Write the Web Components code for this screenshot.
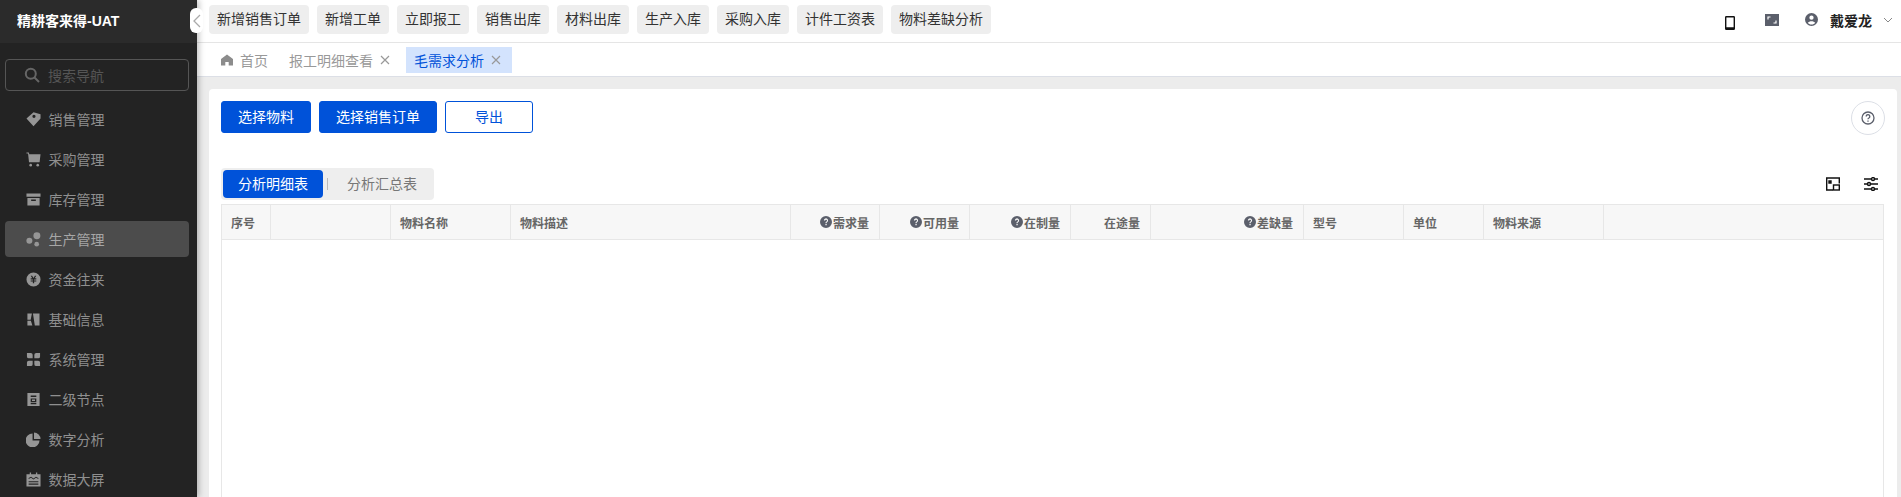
<!DOCTYPE html>
<html lang="zh">
<head>
<meta charset="utf-8">
<title>毛需求分析</title>
<style>
  html, body { margin: 0; height: 100%; overflow: hidden; }
  body { font-family: "Liberation Sans", "Noto Sans CJK SC", sans-serif; font-size: 14px; }
</style>
</head>
<body>
<app-shell>
  <side-bar slot="side" title-text="精耕客来得-UAT">
    <nav-item icon="tag">销售管理</nav-item>
    <nav-item icon="cart">采购管理</nav-item>
    <nav-item icon="box">库存管理</nav-item>
    <nav-item icon="dots" active>生产管理</nav-item>
    <nav-item icon="coin">资金往来</nav-item>
    <nav-item icon="layout">基础信息</nav-item>
    <nav-item icon="apps">系统管理</nav-item>
    <nav-item icon="doc">二级节点</nav-item>
    <nav-item icon="pie">数字分析</nav-item>
    <nav-item icon="board">数据大屏</nav-item>
  </side-bar>

  <top-bar slot="top" user="戴爱龙">
    <quick-link>新增销售订单</quick-link>
    <quick-link>新增工单</quick-link>
    <quick-link>立即报工</quick-link>
    <quick-link>销售出库</quick-link>
    <quick-link>材料出库</quick-link>
    <quick-link>生产入库</quick-link>
    <quick-link>采购入库</quick-link>
    <quick-link>计件工资表</quick-link>
    <quick-link>物料差缺分析</quick-link>
  </top-bar>

  <tab-strip slot="top">
    <page-tab home>首页</page-tab>
    <page-tab closable>报工明细查看</page-tab>
    <page-tab closable active>毛需求分析</page-tab>
  </tab-strip>

  <analysis-card>
    <action-button slot="actions" primary>选择物料</action-button>
    <action-button slot="actions" primary>选择销售订单</action-button>
    <action-button slot="actions" wide>导出</action-button>

    <seg-item slot="segments" active>分析明细表</seg-item>
    <seg-item slot="segments">分析汇总表</seg-item>

    <data-table slot="table">
      <head-cell>序号</head-cell>
      <head-cell></head-cell>
      <head-cell>物料名称</head-cell>
      <head-cell>物料描述</head-cell>
      <head-cell end hint>需求量</head-cell>
      <head-cell end hint>可用量</head-cell>
      <head-cell end hint>在制量</head-cell>
      <head-cell end>在途量</head-cell>
      <head-cell end hint>差缺量</head-cell>
      <head-cell>型号</head-cell>
      <head-cell>单位</head-cell>
      <head-cell>物料来源</head-cell>
      <head-cell></head-cell>
    </data-table>
  </analysis-card>
</app-shell>

<script>
const ICONS = {
  tag: '<path fill-rule="evenodd" d="M8 .3 15.500 2.500V7L8 15.300.5 6.800zM8.500 2.900a1.700 1.700 0 1 0 0 3.400 1.700 1.700 0 0 0 0-3.400z"/>',
  cart: '<path d="M.5.5H3L3.500 2.500H15.500L14.500 11H3.200L2.200 1.700H.5z"/><circle cx="5" cy="14" r="1.400"/><circle cx="12.500" cy="14" r="1.400"/>',
  box: '<path fill-rule="evenodd" d="M.5 1.500h15v3.500H.5zM1.500 6.300h13v8.200h-13zM5.500 8v1.500h5V8z"/>',
  dots: '<circle cx="11.600" cy="4" r="3.700"/><circle cx="3.600" cy="9.400" r="3.200"/><circle cx="11.400" cy="13" r="2.500"/>',
  coin: '<path fill-rule="evenodd" d="M8 .5a7.500 7.500 0 1 0 0 15A7.500 7.500 0 0 0 8 .5zM5 4h1.500L8 6.300 9.500 4H11L9.300 6.700H11v1.200H8.700V9H11v1.200H8.700V12H7.300v-1.800H5V9h2.300V7.900H5V6.700h1.700z"/>',
  layout: '<path d="M1.500 1.500H6.300L5 8.200H1.500zM7.400 1.500h7v13h-5zM1.500 9.300H5.200L6.800 14.500H1.500z"/>',
  apps: '<path d="M1 1h4.100a2 2 0 0 1 2 2v3.700H3a2 2 0 0 1-2-2zM15 1h-4.100a2 2 0 0 0-2 2v3.700H13a2 2 0 0 0 2-2zM1 15h4.100a2 2 0 0 0 2-2V9.300H3a2 2 0 0 0-2 2zM15 15h-4.100a2 2 0 0 1-2-2V9.300H13a2 2 0 0 1 2 2z"/>',
  doc: '<path fill-rule="evenodd" d="M1.500 1h13v14h-13zM5 3.800v1.400h6V3.800zM5 6.800v4h6v-4zM6.400 8h3.200v1.600H6.400zM5 11.800v1.200h6v-1.200z"/>',
  pie: '<path d="M7 1.600V9h7.400A7.400 7.400 0 1 1 7 1.600z"/><path d="M8.500.5A7 7 0 0 1 15.500 7.500H8.500z"/>',
  board: '<path fill-rule="evenodd" d="M.5 2.500H4V.5h1.400v2h5.200V.5H12v2h3.500v13H.5zM2.800 6.300v1.200l2.600-1.300 2.600 1.800 2.600-1.800 2.600 1.300V6.300L10.600 5 8 6.800 5.400 5zM2.800 9.800v1.200h10.400V9.800zM2.800 12.300v1.200h10.400v-1.200z"/>'
};

function defineSimple(name, css, html) {
  customElements.define(name, class extends HTMLElement {
    constructor() {
      super();
      this.attachShadow({ mode: "open" }).innerHTML = `<style>${css}</style>${html(this)}`;
    }
  });
}

defineSimple("app-shell", `
  :host { display: grid; grid-template-columns: 197px 1fr; height: 497px; background: #ececec; overflow: hidden; }
  .main { display: flex; flex-direction: column; min-width: 0; height: 100%; }
  .side { position: relative; z-index: 2; box-shadow: 2px 0 6px rgba(0, 0, 0, .25); }
`, () => `
  <div class="side"><slot name="side"></slot></div>
  <div class="main">
    <slot name="top"></slot>
    <slot></slot>
  </div>
`);

class SideBar extends HTMLElement {
  constructor() {
    super();
    this.attachShadow({ mode: "open" });
  }
  connectedCallback() {
    this.shadowRoot.innerHTML = `
      <style>
        :host { display: flex; flex-direction: column; height: 497px; background: #232323; position: relative; }
        .brand { height: 43px; flex: none; background: #2b2b2b; display: flex; align-items: center; padding: 0 0 3px 17px; box-sizing: border-box;
          color: #fff; font-weight: bold; font-size: 14px; }
        .search { height: 32px; margin: 16px 8px 8px 5px; border: 1px solid #555; border-radius: 4px; box-sizing: border-box;
          display: flex; align-items: center; gap: 8px; padding-left: 18px; color: #555; flex: none; }
        .search svg { width: 16px; height: 16px; }
        .fold { position: absolute; left: 190px; top: 8px; width: 13px; height: 25px; background: #fff; border-radius: 6px;
          display: flex; align-items: center; justify-content: center; z-index: 3; }
        .fold svg { width: 8px; height: 14px; }
      </style>
      <div class="brand">${this.getAttribute("title-text")}</div>
      <div class="fold"><svg viewBox="0 0 8 14"><path d="M7 1 1 7l6 6" fill="none" stroke="#aaa" stroke-width="1.300"/></svg></div>
      <div class="search">
        <svg viewBox="0 0 16 16" fill="none" stroke="#666" stroke-width="2"><circle cx="6.800" cy="6.800" r="5"/><path d="m10.500 10.500 4.500 4.500"/></svg>
        <span>搜索导航</span>
      </div>
      <slot></slot>
    `;
  }
}
customElements.define("side-bar", SideBar);

class NavItem extends HTMLElement {
  constructor() {
    super();
    this.attachShadow({ mode: "open" });
  }
  connectedCallback() {
    this.shadowRoot.innerHTML = `
      <style>
        :host { display: flex; align-items: center; height: 36px; margin: 2px 8px 2px 5px; padding-left: 20.5px; gap: 8px;
          border-radius: 4px; color: #8f8f8f; font-size: 14px; flex: none; }
        :host([active]) { background: #4c4c4c; color: #a6a6a6; }
        svg { width: 15px; height: 15px; fill: #969696; flex: none; }
      </style>
      <svg viewBox="0 0 16 16">${ICONS[this.getAttribute("icon")]}</svg>
      <slot></slot>
    `;
  }
}
customElements.define("nav-item", NavItem);

defineSimple("top-bar", `
  :host { display: flex; align-items: center; height: 43px; box-sizing: border-box; background: #fff; border-bottom: 1px solid #e5e5e5;
    padding: 0 8px 3px 12px; flex: none; }
  .links { display: flex; gap: 8px; flex: 1; }
  .tools { display: flex; align-items: center; color: #222; font-weight: bold; }
  .phone { width: 10px; height: 14px; margin-top: 7px; margin-right: 30px; }
  .full { width: 14px; height: 12px; margin-right: 26px; }
  .user { width: 13px; height: 13px; margin-right: 12px; }
  .chev { width: 10px; height: 6px; margin-left: 11px; }
`, (el) => `
  <div class="links"><slot></slot></div>
  <div class="tools">
    <svg class="phone" viewBox="0 0 10 14"><path fill-rule="evenodd" fill="#111" d="M1.300 0h7.400A1.300 1.300 0 0 1 10 1.300v11.400A1.300 1.300 0 0 1 8.700 14H1.300A1.300 1.300 0 0 1 0 12.700V1.300A1.300 1.300 0 0 1 1.300 0zM1.400 1.600v9.600h7.200V1.600z"/></svg>
    <svg class="full" viewBox="0 0 14 12"><path fill="#5b5f6b" d="M0 0h14v12H0z"/><path fill="none" stroke="#fff" stroke-width="1.200" d="M3 5.500V3h2.500M11 6.500V9H8.500"/></svg>
    <svg class="user" viewBox="0 0 14 14"><path fill-rule="evenodd" fill="#5b5f6b" d="M7 0a7 7 0 1 1 0 14A7 7 0 0 1 7 0zM7 2.800a2.300 2.300 0 1 0 0 4.600 2.300 2.300 0 0 0 0-4.600zM3 10.500c.8 1.200 2.300 2 4 2s3.200-.8 4-2c-.8-1-2.300-1.700-4-1.700s-3.200.7-4 1.700z"/></svg>
    <span>${el.getAttribute("user")}</span>
    <svg class="chev" viewBox="0 0 10 6"><path d="m1 1 4 4 4-4" fill="none" stroke="#888" stroke-width="1"/></svg>
  </div>
`);

defineSimple("quick-link", `
  :host { display: block; height: 29px; line-height: 29px; padding: 0 8px; border-radius: 4px; background: #eee; color: #333; font-size: 14px; white-space: nowrap; }
`, () => `<slot></slot>`);

defineSimple("tab-strip", `
  :host { display: flex; align-items: center; height: 34px; box-sizing: border-box; background: #fff; border-bottom: 1px solid #dcdfe6; padding: 0 0 0 16px; flex: none; }
`, () => `<slot></slot>`);

class PageTab extends HTMLElement {
  constructor() {
    super();
    this.attachShadow({ mode: "open" });
  }
  connectedCallback() {
    const home = this.hasAttribute("home") ? `<svg class="home" viewBox="0 0 12 12"><path fill="#8c8c8c" d="M6 .5 12 5v6.500H7.700V8H4.300v3.500H0V5z"/></svg>` : "";
    const close = this.hasAttribute("closable") ? `<svg class="x" viewBox="0 0 10 10"><path d="m1 1 8 8M9 1 1 9" fill="none" stroke="#999" stroke-width="1.200"/></svg>` : "";
    this.shadowRoot.innerHTML = `
      <style>
        :host { display: flex; align-items: center; height: 26px; padding: 0 8px; color: #999; font-size: 14px; white-space: nowrap; margin-right: 5px; }
        :host([closable]) { margin-right: 8px; }
        :host([active]) { background: #d3e3fd; color: #0052d9; padding-right: 11px; }
        .home { width: 12px; height: 12px; margin-right: 7px; }
        .x { width: 10px; height: 10px; margin-left: 7px; }
      </style>
      ${home}<slot></slot>${close}
    `;
  }
}
customElements.define("page-tab", PageTab);

defineSimple("analysis-card", `
  :host { display: flex; flex-direction: column; flex: 1; min-height: 0; margin: 12px 4px 0 12px; padding: 12px 13px 0 12px; background: #fff; border-radius: 4px 4px 0 0; }
  .row { display: flex; justify-content: space-between; }
  .actions { display: flex; gap: 8px; }
  .help { width: 34px; height: 34px; box-sizing: border-box; border: 1px solid #dcdfe6; border-radius: 50%; display: flex; align-items: center; justify-content: center; margin-right: -1px; }
  .help svg { width: 14px; height: 14px; }
  .seg-row { display: flex; justify-content: space-between; align-items: center; margin-top: 33px; height: 32px; flex: none; }
  .seg { display: flex; align-items: center; width: 213px; height: 32px; box-sizing: border-box; background: #eee; border-radius: 4px; padding-left: 2px; }
  .tools { display: flex; gap: 24px; padding-right: 6px; }
  .tools svg { width: 14px; height: 14px; fill: none; stroke: #111; stroke-width: 1.400; }
  .table { flex: 1; display: flex; margin-top: 4px; min-height: 0; }
  ::slotted(data-table) { flex: 1; }
`, () => `
  <div class="row">
    <div class="actions"><slot name="actions"></slot></div>
    <div class="help"><svg viewBox="0 0 14 14" fill="none" stroke="#5b5f6b" stroke-width="1.300"><circle cx="7" cy="7" r="6"/><path d="M5.200 5.400a1.800 1.800 0 1 1 2.700 1.600c-.6.300-.9.700-.9 1.300"/><path d="M7 9.500v1.200"/></svg></div>
  </div>
  <div class="seg-row">
    <div class="seg"><slot name="segments"></slot></div>
    <div class="tools">
      <svg viewBox="0 0 14 14"><path d="M7 13H.7V1H13.300V6.500"/><rect x="7.500" y="8" width="5.800" height="5"/><path d="M3 4h2v2H3z" fill="#111"/></svg>
      <svg viewBox="0 0 14 14"><path d="M0 2h14M0 7h14M0 12h14"/><circle cx="9" cy="2" r="1.500" fill="#fff"/><circle cx="5" cy="7" r="1.500" fill="#fff"/><circle cx="9" cy="12" r="1.500" fill="#fff"/></svg>
    </div>
  </div>
  <div class="table"><slot name="table"></slot></div>
`);

defineSimple("action-button", `
  :host { display: block; height: 32px; line-height: 30px; box-sizing: border-box; padding: 0 16px; border: 1px solid #0052d9; border-radius: 3px; background: #fff; color: #0052d9; font-size: 14px; white-space: nowrap; }
  :host([primary]) { background: #0052d9; color: #fff; }
  :host([wide]) { padding: 0 29px; }
`, () => `<slot></slot>`);

defineSimple("seg-item", `
  :host { display: block; position: relative; height: 28px; line-height: 28px; font-size: 14px; color: #777; padding: 0 15px; border-radius: 4px; white-space: nowrap; }
  :host([active]) { background: #0052d9; color: #fff; margin-right: 4px; }
  :host(:not([active])) { padding-left: 20px; }
  :host(:not([active]))::before { content: ""; position: absolute; left: 0; top: 8px; height: 12px; border-left: 1px solid #bbb; }
`, () => `<slot></slot>`);

defineSimple("data-table", `
  :host { display: block; box-sizing: border-box; border: 1px solid #e7e7e7; border-bottom: 0; }
  .head { display: grid; height: 35px; box-sizing: border-box; grid-template-columns: 49px 120px 120px 280px 89px 90px 101px 80px 153px 100px 80px 120px 1fr; background: #f7f7f7; border-bottom: 1px solid #e7e7e7; }
`, () => `<div class="head"><slot></slot></div>`);

class HeadCell extends HTMLElement {
  constructor() {
    super();
    this.attachShadow({ mode: "open" });
  }
  connectedCallback() {
    const hint = this.hasAttribute("hint")
      ? `<svg viewBox="0 0 12 12"><path fill-rule="evenodd" fill="#5b5f6b" d="M6 0a6 6 0 1 1 0 12A6 6 0 0 1 6 0zM3.900 4.600h1.300a.9.9 0 1 1 1.300.8c-.6.4-1.100.8-1.100 1.800h1.200c0-.6.200-.8.700-1.100a2.100 2.100 0 1 0-3.400-1.500zM5.400 8v1.300h1.300V8z"/></svg>`
      : "";
    this.shadowRoot.innerHTML = `
      <style>
        :host { display: flex; align-items: center; box-sizing: border-box; padding: 0 9px; border-right: 1px solid #e7e7e7; font-size: 12px; font-weight: bold; color: #666; white-space: nowrap; }
        :host([end]) { justify-content: flex-end; padding-right: 10px; }
        :host(:last-child) { border-right: 0; }
        svg { width: 12px; height: 12px; margin-right: 1px; flex: none; }
      </style>
      ${hint}<slot></slot>
    `;
  }
}
customElements.define("head-cell", HeadCell);
</script>
</body>
</html>
